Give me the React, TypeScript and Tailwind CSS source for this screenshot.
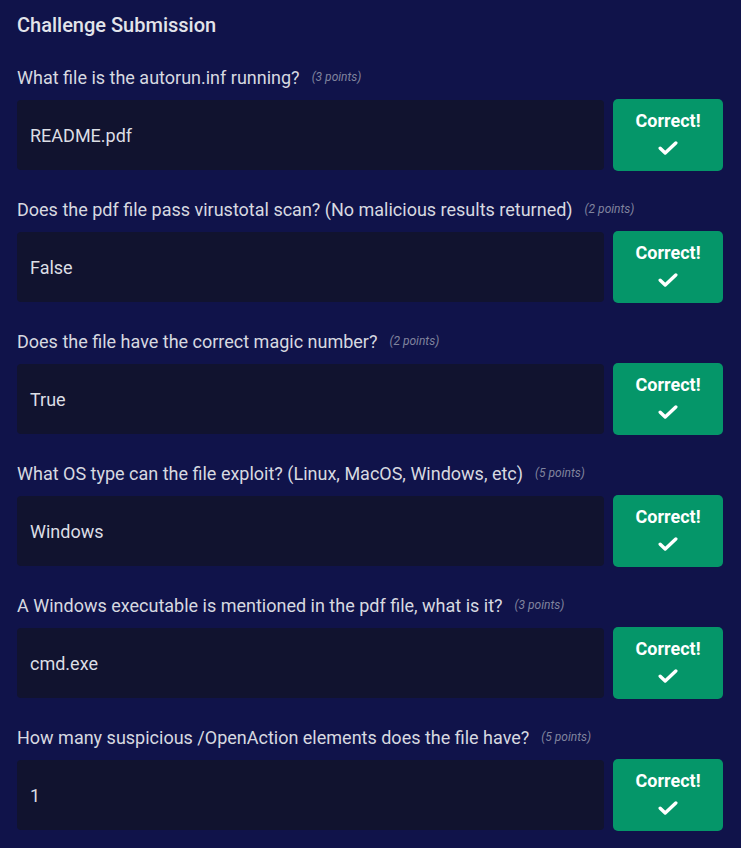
import React from "react";

const items = [
  { q: "What file is the autorun.inf running?", p: 3, a: "README.pdf" },
  { q: "Does the pdf file pass virustotal scan? (No malicious results returned)", p: 2, a: "False" },
  { q: "Does the file have the correct magic number?", p: 2, a: "True" },
  { q: "What OS type can the file exploit? (Linux, MacOS, Windows, etc)", p: 5, a: "Windows" },
  { q: "A Windows executable is mentioned in the pdf file, what is it?", p: 3, a: "cmd.exe" },
  { q: "How many suspicious /OpenAction elements does the file have?", p: 5, a: "1" },
];

function Check() {
  return (
    <svg width="20" height="14" viewBox="0 0 20 14" fill="none">
      <path d="M2.2 7.2 L7.2 12 L17.8 2" stroke="white" strokeWidth="3.4" strokeLinecap="round" strokeLinejoin="round" />
    </svg>
  );
}

export default function App() {
  return (
    <div
      className="min-h-[848px] w-[741px] bg-[#10134a] px-[17px] pt-[12px] pb-[17px]"
      style={{ fontFamily: "Roboto, 'Liberation Sans', sans-serif" }}
    >
      <h1 className="text-[20px] leading-[26px] font-medium text-[#e2e4ea]">Challenge Submission</h1>
      <div className="mt-[27px] flex flex-col gap-[26px]">
        {items.map((it, i) => (
          <div key={i} className="flex flex-col gap-[10px]">
            <div className="flex items-center h-[24px]">
              <span className="text-[18px] text-[#d7d9e0]">{it.q}</span>
              <span className="ml-[12px] text-[12px] italic text-[#80849e]">({it.p} points)</span>
            </div>
            <div className="flex items-center gap-[9px] pr-[1px]">
              <div className="flex-1 h-[70px] rounded-[4px] bg-[#11132f] flex items-center pl-[13px] text-[18px] text-[#dcdee5]">
                {it.a}
              </div>
              <div className="w-[110px] h-[72px] rounded-[5px] bg-[#059669] flex flex-col items-center pt-[11px] gap-[9px]">
                <span className="text-[18px] font-bold text-white leading-[22px]">Correct!</span>
                <Check />
              </div>
            </div>
          </div>
        ))}
      </div>
    </div>
  );
}
